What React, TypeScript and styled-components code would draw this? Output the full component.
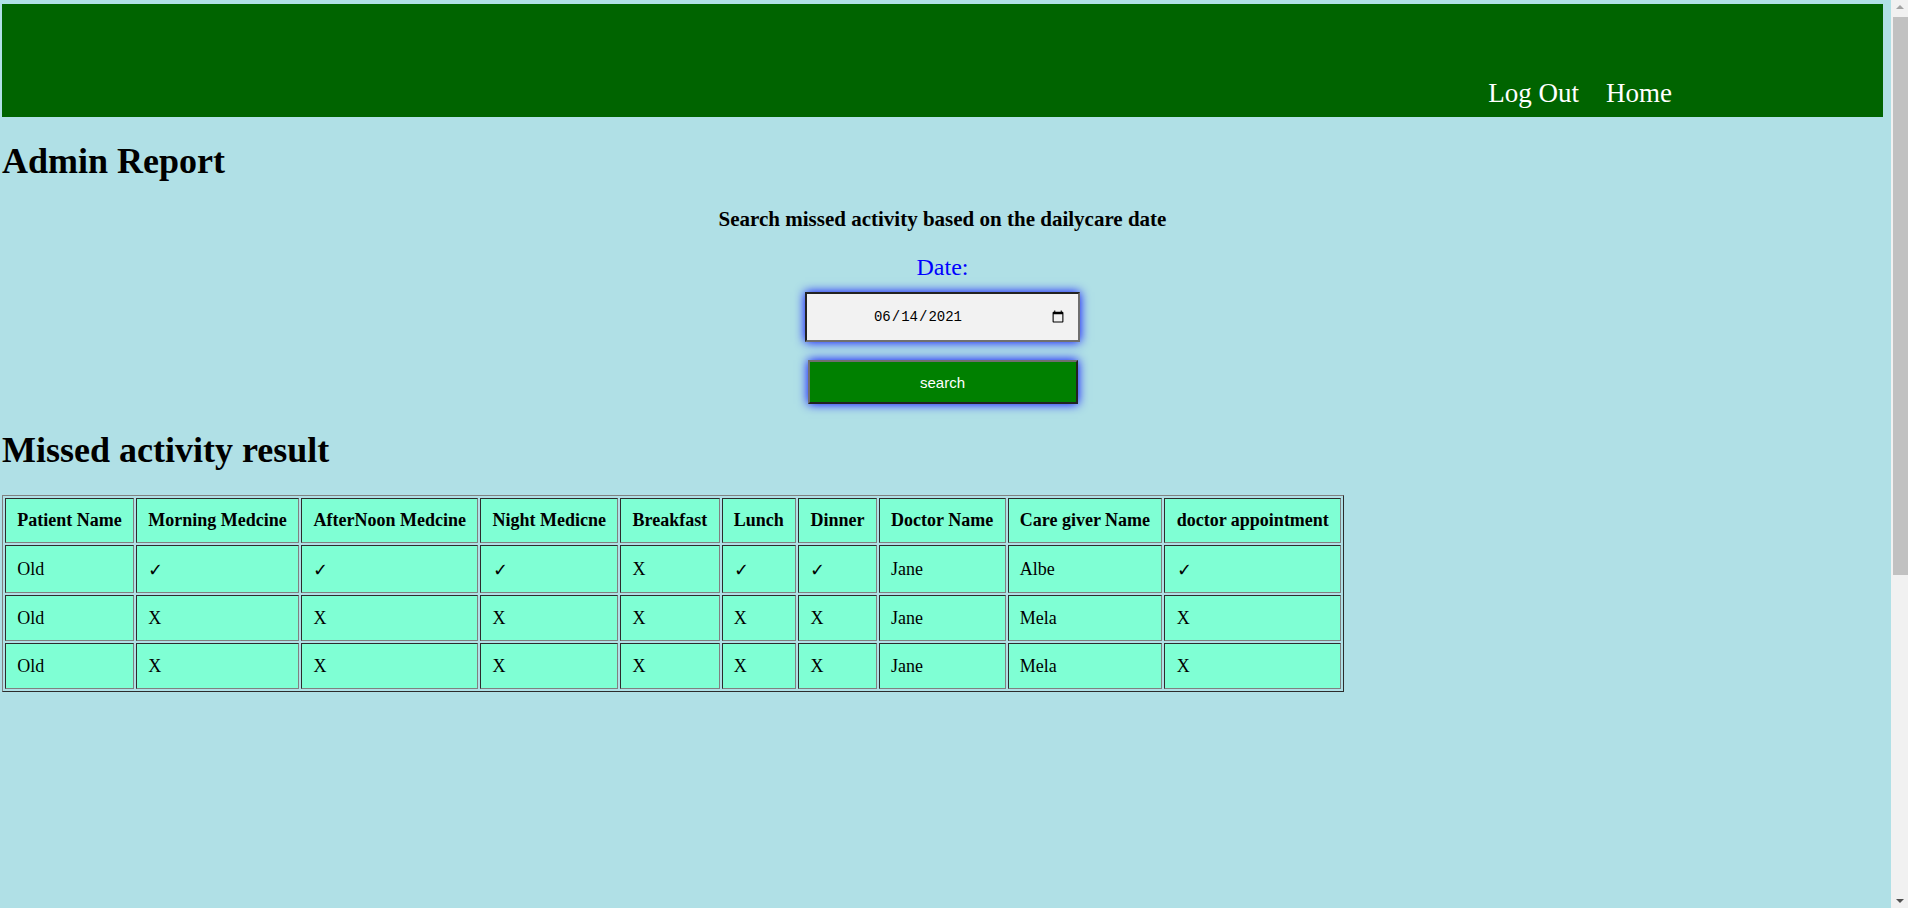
import React from "react";
import styled, { createGlobalStyle } from "styled-components";

const GlobalStyle = createGlobalStyle`
  html, body {
    margin: 0;
    padding: 0;
    background: #b0e0e6;
    overflow: hidden;
  }
  body {
    font-family: "Liberation Serif", "Times New Roman", serif;
    color: #000;
  }
`;

const Page = styled.div`
  box-sizing: border-box;
  padding: 4px 25px 0 2px;
`;

const Header = styled.header`
  box-sizing: border-box;
  height: 113px;
  background: #006400;
  display: flex;
  justify-content: flex-end;
  align-items: flex-end;
  padding: 0 211px 8px 0;
`;

const Nav = styled.nav`
  display: flex;
  gap: 27px;
`;

const NavLink = styled.a`
  font-family: "Liberation Serif", "Times New Roman", serif;
  font-size: 27px;
  line-height: 31px;
  color: #ffffff;
  text-decoration: none;
  cursor: pointer;
`;

const Title = styled.h1<{ $top: number }>`
  margin: ${(p) => p.$top}px 0 0 0;
  font-size: 36px;
  line-height: 40px;
  font-weight: bold;
`;

const Subtitle = styled.h3`
  margin: 26px 0 0 0;
  text-align: center;
  font-size: 21px;
  line-height: 24px;
  font-weight: bold;
`;

const SearchForm = styled.form`
  display: flex;
  flex-direction: column;
  align-items: center;
`;

const DateLabel = styled.label`
  margin-top: 22px;
  font-size: 24px;
  line-height: 28px;
  color: #0000ff;
`;

const DateInput = styled.input`
  box-sizing: border-box;
  margin-top: 11px;
  width: 275px;
  height: 50px;
  border: 2px solid;
  border-color: #222222 #6f6f6f #6f6f6f #222222;
  background: #f2f2f2;
  box-shadow: 0 0 10px #0000ff;
  font-family: "Liberation Mono", "DejaVu Sans Mono", monospace;
  font-size: 14px;
  text-align: center;
  color: #000;
  padding: 1px 6px;
  outline: none;

  &::-webkit-calendar-picker-indicator {
    margin-left: 26px;
    margin-right: 5px;
  }
`;

const SearchButton = styled.button`
  box-sizing: border-box;
  margin-top: 18px;
  width: 270px;
  height: 44px;
  border: 2px solid;
  border-color: #6f6f6f #222222 #222222 #6f6f6f;
  background: #008000;
  color: #ffffff;
  box-shadow: 0 0 10px #0000ff;
  font-family: "Liberation Sans", Arial, sans-serif;
  font-size: 15px;
  cursor: pointer;
`;

const ResultTable = styled.table`
  margin-top: 25px;
  border: 1px outset #808080;
  border-spacing: 2px;
  font-family: "Liberation Serif", "Times New Roman", serif;
  font-size: 18px;
`;

const HeadCell = styled.th`
  border: 1px inset #808080;
  background: #7fffd4;
  padding: 11px 11.3px;
  font-weight: bold;
  text-align: center;
  white-space: nowrap;
`;

const Cell = styled.td`
  border: 1px inset #808080;
  background: #7fffd4;
  padding: 11.5px 11.3px;
  text-align: left;
  white-space: nowrap;
`;

const Check = styled.span`
  display: inline-block;
  line-height: 23px;
  font-family: "DejaVu Sans", sans-serif;
  font-size: 18px;
  font-weight: 200;
`;

const ScrollTrack = styled.div`
  position: fixed;
  top: 0;
  right: 0;
  width: 17px;
  height: 100vh;
  background: #f1f1f1;
`;

const ScrollThumb = styled.div`
  position: absolute;
  top: 17px;
  left: 2px;
  right: 0;
  height: 558px;
  background: #c1c1c1;
`;

const Arrow = styled.div<{ $down?: boolean }>`
  position: absolute;
  left: 5px;
  ${(p) => (p.$down ? "bottom: 5px;" : "top: 5px;")}
  width: 0;
  height: 0;
  border-left: 4px solid transparent;
  border-right: 4px solid transparent;
  ${(p) =>
    p.$down
      ? "border-top: 4px solid #505050;"
      : "border-bottom: 4px solid #a3a3a3;"}
`;

const headers = [
  "Patient Name",
  "Morning Medcine",
  "AfterNoon Medcine",
  "Night Medicne",
  "Breakfast",
  "Lunch",
  "Dinner",
  "Doctor Name",
  "Care giver Name",
  "doctor appointment",
];

const CHECK = "\u2713";

const rows: string[][] = [
  ["Old", CHECK, CHECK, CHECK, "X", CHECK, CHECK, "Jane", "Albe", CHECK],
  ["Old", "X", "X", "X", "X", "X", "X", "Jane", "Mela", "X"],
  ["Old", "X", "X", "X", "X", "X", "X", "Jane", "Mela", "X"],
];

export default function App() {
  return (
    <>
      <GlobalStyle />
      <Page>
        <Header>
          <Nav>
            <NavLink>Log Out</NavLink>
            <NavLink>Home</NavLink>
          </Nav>
        </Header>
        <Title $top={24}>Admin Report</Title>
        <Subtitle>Search missed activity based on the dailycare date</Subtitle>
        <SearchForm onSubmit={(e) => e.preventDefault()}>
          <DateLabel htmlFor="dc-date">Date:</DateLabel>
          <DateInput id="dc-date" type="date" defaultValue="2021-06-14" />
          <SearchButton type="submit">search</SearchButton>
        </SearchForm>
        <Title $top={26}>Missed activity result</Title>
        <ResultTable>
          <thead>
            <tr>
              {headers.map((h) => (
                <HeadCell key={h}>{h}</HeadCell>
              ))}
            </tr>
          </thead>
          <tbody>
            {rows.map((r, i) => (
              <tr key={i}>
                {r.map((c, j) => (
                  <Cell key={j}>{c === CHECK ? <Check>{c}</Check> : c}</Cell>
                ))}
              </tr>
            ))}
          </tbody>
        </ResultTable>
      </Page>
      <ScrollTrack>
        <Arrow />
        <ScrollThumb />
        <Arrow $down />
      </ScrollTrack>
    </>
  );
}
